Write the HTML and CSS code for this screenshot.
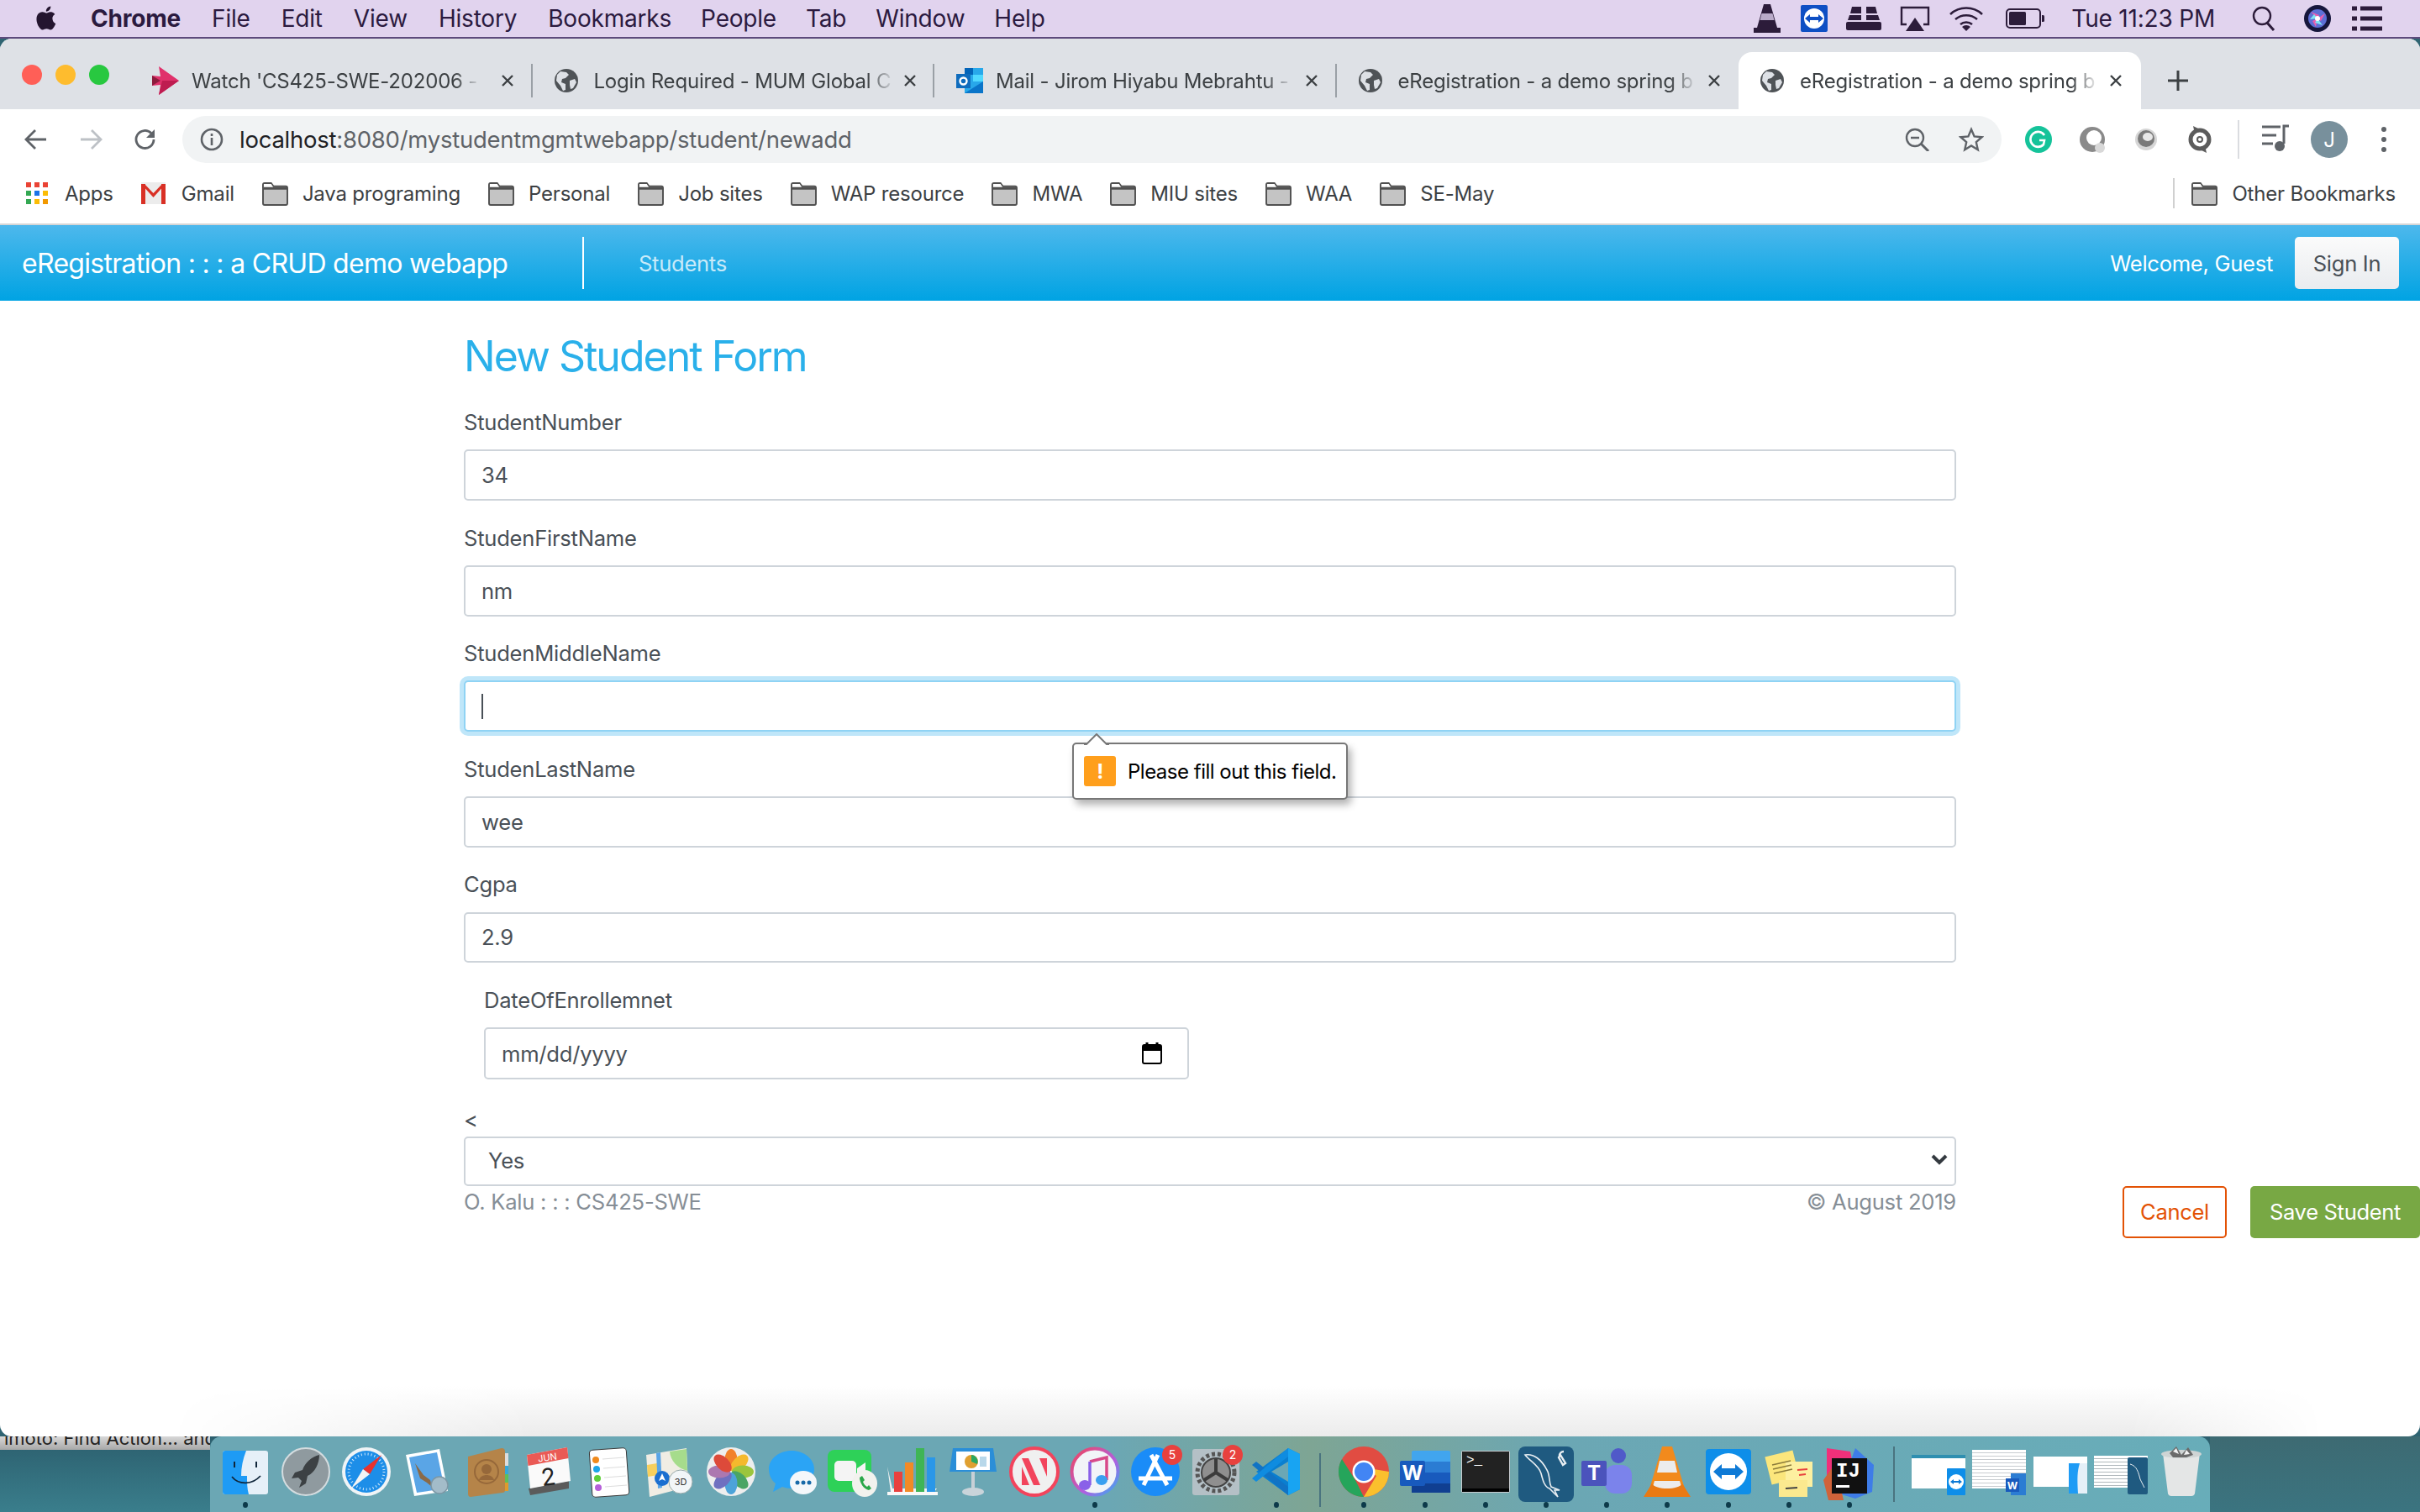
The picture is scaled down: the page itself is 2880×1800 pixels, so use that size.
FILE: index.html
```html
<!DOCTYPE html>
<html lang="en">
<head>
    <meta charset="UTF-8">
    <title>eRegistration - a demo spring boot webapp</title>
    <link rel="stylesheet" href="styles.css">
</head>
<body>
    <svg class="defs" width="0" height="0">
        <symbol id="globe" viewBox="0 0 28 28">
            <circle cx="14" cy="14" r="14" fill="#4f5357"/>
            <path d="M7 3l7 1 3 3-4 4-4 1-1 4 5 2v7l-3 1-3-6-5-6 1-7z" fill="#dee1e6"/>
            <path d="M18 14l6-2 2 4-4 7-3 1-1-5z" fill="#dee1e6"/>
        </symbol>
        <symbol id="folder" viewBox="0 0 32 30">
            <path d="M1 4a2 2 0 012-2h8l3 4h15a2 2 0 012 2v19a2 2 0 01-2 2H3a2 2 0 01-2-2z" fill="#c4c4c4" stroke="#505050" stroke-width="2"/>
            <path d="M1 9h30" stroke="#505050" stroke-width="2"/>
            <path d="M2 3h9l3 5H2z" fill="#fff"/>
            <path d="M2 8h28" stroke="#505050" stroke-width="2"/>
        </symbol>
        <symbol id="close" viewBox="0 0 16 16">
            <path d="M2 2l12 12M14 2L2 14" stroke="#3c4043" stroke-width="2.4"/>
        </symbol>
    </svg>

    <div class="menubar">
        <svg class="apple" viewBox="3 2 18 21"><path fill="#24152f" d="M16.4 12.6c0-2.4 2-3.5 2.1-3.6-1.1-1.7-2.9-1.9-3.5-1.9-1.5-.2-2.9.9-3.7.9-.8 0-1.9-.9-3.2-.8-1.6 0-3.2 1-4 2.4-1.7 3-.4 7.4 1.2 9.8.8 1.2 1.8 2.5 3.1 2.4 1.2 0 1.7-.8 3.2-.8s1.9.8 3.2.8c1.3 0 2.2-1.2 3-2.4.9-1.4 1.3-2.7 1.3-2.8-.1 0-2.6-1-2.6-4zM14 5.4c.7-.8 1.1-1.9 1-3-1 0-2.1.6-2.8 1.4-.6.7-1.2 1.9-1 2.9 1.1.1 2.2-.5 2.8-1.3z"/></svg>
        <span class="menu-app">Chrome</span>
        <span class="menu-item">File</span>
        <span class="menu-item">Edit</span>
        <span class="menu-item">View</span>
        <span class="menu-item">History</span>
        <span class="menu-item">Bookmarks</span>
        <span class="menu-item tight">People</span>
        <span class="menu-item tight">Tab</span>
        <span class="menu-item tight">Window</span>
        <span class="menu-item tight">Help</span>
        <div class="menu-right">
            <svg class="st-vlc" width="32" height="34" viewBox="0 0 32 34"><path d="M12 0h8l8 28h4v6H0v-6h4z" fill="#2c1c3a"/><path d="M9.5 11h13l2 8h-17z" fill="#b9aac8"/></svg>
            <svg class="st-tv" width="32" height="32" viewBox="0 0 32 32"><rect width="32" height="32" rx="2" fill="#0e4fc4"/><circle cx="16" cy="16" r="12" fill="#fff"/><path d="M5 16l6-5v3h10v-3l6 5-6 5v-3H11v3z" fill="#0e4fc4"/></svg>
            <svg class="st-grid" width="42" height="28" viewBox="0 0 42 28"><path d="M7 0h11v8H5zM24 0h11l2 8H24zM4 10h14v6H2zM24 10h14l2 6H24z" fill="#2c1c3a"/><rect y="18" width="42" height="10" rx="2" fill="#2c1c3a"/></svg>
            <svg class="st-air" width="36" height="30" viewBox="0 0 36 30"><path d="M8 22H2V2h32v20h-6" fill="none" stroke="#2c1c3a" stroke-width="2.4"/><path d="M18 14l11 16H7z" fill="#2c1c3a"/></svg>
            <svg class="st-wifi" width="42" height="30" viewBox="0 0 42 30"><path d="M2 10a28 28 0 0138 0M8 16a20 20 0 0126 0M14 22a11 11 0 0114 0" fill="none" stroke="#2c1c3a" stroke-width="2.6"/><path d="M21 30l-5-5a7 7 0 0110 0z" fill="#2c1c3a"/></svg>
            <svg class="st-batt" width="46" height="24" viewBox="0 0 46 24"><rect x="1" y="1" width="40" height="22" rx="4" fill="none" stroke="#2c1c3a" stroke-width="2"/><rect x="4" y="4" width="20" height="16" rx="1.5" fill="#2c1c3a"/><path d="M43 8h1.5a1.5 1.5 0 011.5 1.5v5a1.5 1.5 0 01-1.5 1.5H43z" fill="#2c1c3a"/></svg>
            <span class="menu-clock">Tue 11:23 PM</span>
            <svg class="st-search" width="28" height="30" viewBox="0 0 28 30"><circle cx="12" cy="12" r="10" fill="none" stroke="#2c1c3a" stroke-width="2.4"/><path d="M18 20l8 9" stroke="#2c1c3a" stroke-width="3"/></svg>
            <svg class="st-siri" width="32" height="32" viewBox="0 0 32 32"><circle cx="16" cy="16" r="16" fill="#16163c"/><circle cx="16" cy="16" r="11" fill="#5d6fd6"/><path d="M16 16L8 8l10 4zM16 16l9-6-5 9zM16 16l-2 10-4-7z" fill="#e85fb0"/><path d="M16 16l6 8-9-3zM16 16l-9 1 5-6z" fill="#7fe3f2"/><circle cx="16" cy="16" r="3" fill="#fff"/></svg>
            <svg class="st-list" width="36" height="30" viewBox="0 0 36 30"><path d="M0 3h6M10 3h26M0 15h6M10 15h26M0 27h6M10 27h26" stroke="#2c1c3a" stroke-width="5"/></svg>
        </div>
    </div>

    <div class="window">
        <div class="tabstrip">
            <div class="lights"><i class="light red"></i><i class="light yellow"></i><i class="light green"></i></div>
            <div class="tab sep">
                <svg class="favicon" width="32" height="34" viewBox="0 0 32 34"><path d="M8 0l24 17L8 34l2-12-10 1V11l10 1z" fill="#e0316b"/><path d="M0 11l10 6-10 6z" fill="#8c1c3c"/><path d="M8 34l24-17H12z" fill="#be1c50"/></svg>
                <span class="tab-title">Watch 'CS425-SWE-202006 -</span>
                <svg class="tab-close" width="16" height="16"><use href="#close"/></svg>
            </div>
            <div class="tab sep">
                <svg class="favicon" width="28" height="28"><use href="#globe"/></svg>
                <span class="tab-title">Login Required - MUM Global C</span>
                <svg class="tab-close" width="16" height="16"><use href="#close"/></svg>
            </div>
            <div class="tab sep">
                <svg class="favicon" width="32" height="30" viewBox="0 0 32 30"><rect x="10" y="0" width="22" height="30" fill="#28a8ea"/><rect x="10" y="0" width="10" height="8" fill="#0364b8"/><rect x="20" y="8" width="12" height="8" fill="#50d9ff"/><path d="M10 30l22-14v14z" fill="#0a75c9"/><rect x="0" y="7" width="17" height="17" fill="#0f6cbd"/><circle cx="8.500" cy="15.500" r="4" fill="none" stroke="#fff" stroke-width="2.400"/></svg>
                <span class="tab-title">Mail - Jirom Hiyabu Mebrahtu -</span>
                <svg class="tab-close" width="16" height="16"><use href="#close"/></svg>
            </div>
            <div class="tab">
                <svg class="favicon" width="28" height="28"><use href="#globe"/></svg>
                <span class="tab-title">eRegistration - a demo spring b</span>
                <svg class="tab-close" width="16" height="16"><use href="#close"/></svg>
            </div>
            <div class="tab active">
                <svg class="favicon" width="28" height="28"><use href="#globe"/></svg>
                <span class="tab-title">eRegistration - a demo spring b</span>
                <svg class="tab-close" width="16" height="16"><use href="#close"/></svg>
            </div>
            <svg class="newtab" width="26" height="26" viewBox="0 0 26 26"><path d="M13 1v24M1 13h24" stroke="#3c4043" stroke-width="3"/></svg>
        </div>

        <div class="toolbar">
            <div class="nav-btn"><svg width="28" height="26" viewBox="0 0 28 26"><path d="M26 13H3M13 2L2 13l11 11" fill="none" stroke="#5f6368" stroke-width="2.800"/></svg></div>
            <div class="nav-btn"><svg width="28" height="26" viewBox="0 0 28 26"><path d="M2 13h23M15 2l11 11-11 11" fill="none" stroke="#bdc1c6" stroke-width="2.800"/></svg></div>
            <div class="nav-btn"><svg width="28" height="28" viewBox="0 0 28 28"><path d="M24 14a10.500 10.500 0 11-3-7.400" fill="none" stroke="#5f6368" stroke-width="2.800"/><path d="M25 2v10H15z" fill="#5f6368"/></svg></div>
            <div class="omnibox">
                <svg width="28" height="28" viewBox="0 0 28 28"><circle cx="14" cy="14" r="12" fill="none" stroke="#5f6368" stroke-width="2.600"/><path d="M14 12v9M14 7v3" stroke="#5f6368" stroke-width="2.600"/></svg>
                <span class="url"><b>localhost</b>:8080/mystudentmgmtwebapp/student/newadd</span>
                <svg class="omni-zoom" width="30" height="28" viewBox="0 0 30 28"><circle cx="12" cy="12" r="10" fill="none" stroke="#5f6368" stroke-width="2.400"/><path d="M7 12h10" stroke="#5f6368" stroke-width="2.400"/><path d="M19 19l9 9" stroke="#5f6368" stroke-width="3"/></svg>
                <svg class="omni-star" width="30" height="30" viewBox="0 0 30 30"><path d="M15 3l3.600 8.400 9 .8-6.800 6 2 9L15 22.500 7.200 27.200l2-9-6.800-6 9-.8z" fill="none" stroke="#5f6368" stroke-width="2.400"/></svg>
            </div>
            <div class="ext"><svg width="32" height="32" viewBox="0 0 32 32"><circle cx="16" cy="16" r="16" fill="#15c39a"/><path d="M23 11a9 9 0 10-1 11l1-5h-6" fill="none" stroke="#fff" stroke-width="2.600"/></svg></div>
            <div class="ext"><svg width="32" height="32" viewBox="0 0 32 32"><circle cx="16" cy="16" r="15" fill="#8a8a8a"/><circle cx="18" cy="14" r="9" fill="#fff"/><circle cx="25" cy="26" r="6" fill="#d8d8d8"/></svg></div>
            <div class="ext"><svg width="32" height="32" viewBox="0 0 32 32"><circle cx="16" cy="16" r="13" fill="#d6d6d6"/><circle cx="16" cy="15" r="10" fill="#7a7a7a"/><ellipse cx="18" cy="13" rx="6" ry="5" fill="#e8e8e8"/></svg></div>
            <div class="ext"><svg width="32" height="32" viewBox="0 0 32 32"><circle cx="16" cy="16" r="11" fill="none" stroke="#5c5c5c" stroke-width="5"/><circle cx="16" cy="16" r="3" fill="none" stroke="#5c5c5c" stroke-width="2"/><path d="M8 0l8 4-6 5zM24 32l-8-4 6-5z" fill="#5c5c5c"/></svg></div>
            <i class="tool-divider"></i>
            <div class="media-btn"><svg width="34" height="34" viewBox="0 0 34 34"><path d="M1 4h22M1 14h17M1 24h13" stroke="#5f6368" stroke-width="3"/><path d="M27 24V3h6" fill="none" stroke="#5f6368" stroke-width="3"/><circle cx="22" cy="27" r="6" fill="#5f6368"/></svg></div>
            <div class="avatar">J</div>
            <div class="dots"><i></i><i></i><i></i></div>
        </div>

        <div class="bookmarks">
            <span class="bm bm-apps">
                <svg width="26" height="26" viewBox="0 0 26 26"><rect width="6" height="6" fill="#ea4335"/><rect x="10" width="6" height="6" fill="#ea4335"/><rect x="20" width="6" height="6" fill="#ea4335"/><rect y="10" width="6" height="6" fill="#34a853"/><rect x="10" y="10" width="6" height="6" fill="#1a73e8"/><rect x="20" y="10" width="6" height="6" fill="#fbbc04"/><rect y="20" width="6" height="6" fill="#34a853"/><rect x="10" y="20" width="6" height="6" fill="#fbbc04"/><rect x="20" y="20" width="6" height="6" fill="#f29900"/></svg>
                Apps
            </span>
            <span class="bm bm-gmail">
                <svg width="29" height="26" viewBox="0 0 29 26"><rect width="29" height="26" fill="#ececec"/><path d="M0 26V2h5v24zM24 26V2h5v24z" fill="#d93025"/><path d="M0 2h4l10.500 11L25 2h4L14.500 18z" fill="#d93025"/></svg>
                Gmail
            </span>
            <span class="bm"><svg class="folder" width="31" height="29"><use href="#folder"/></svg>Java programing</span>
            <span class="bm"><svg class="folder" width="31" height="29"><use href="#folder"/></svg>Personal</span>
            <span class="bm"><svg class="folder" width="31" height="29"><use href="#folder"/></svg>Job sites</span>
            <span class="bm"><svg class="folder" width="31" height="29"><use href="#folder"/></svg>WAP resource</span>
            <span class="bm"><svg class="folder" width="31" height="29"><use href="#folder"/></svg>MWA</span>
            <span class="bm"><svg class="folder" width="31" height="29"><use href="#folder"/></svg>MIU sites</span>
            <span class="bm"><svg class="folder" width="31" height="29"><use href="#folder"/></svg>WAA</span>
            <span class="bm"><svg class="folder" width="31" height="29"><use href="#folder"/></svg>SE-May</span>
            <span class="bm bm-other"><svg class="folder" width="31" height="29"><use href="#folder"/></svg>Other Bookmarks</span>
        </div>

        <div class="viewport">
            <nav class="navbar">
                <a class="brand">eRegistration : : : a CRUD demo webapp</a>
                <a class="nav-link">Students</a>
                <span class="welcome">Welcome, Guest</span>
                <a class="signin">Sign In</a>
            </nav>

            <div class="page">
                <form class="student-form">
                    <h2 class="form-title">New Student Form</h2>
                    <div class="form-group">
                        <label>StudentNumber</label>
                        <input class="form-control" type="text" value="34">
                    </div>
                    <div class="form-group">
                        <label>StudenFirstName</label>
                        <input class="form-control" type="text" value="nm">
                    </div>
                    <div class="form-group">
                        <label>StudenMiddleName</label>
                        <div class="form-control focused"><i class="caret"></i></div>
                        <div class="bubble">
                            <svg class="bubble-arrow" width="30" height="14" viewBox="0 0 30 14"><path d="M0 14h2L15 1l13 13h2" fill="#fff" stroke="#777" stroke-width="2"/></svg>
                            <span class="bubble-icon">!</span>
                            Please fill out this field.
                        </div>
                    </div>
                    <div class="form-group">
                        <label>StudenLastName</label>
                        <input class="form-control" type="text" value="wee">
                    </div>
                    <div class="form-group">
                        <label>Cgpa</label>
                        <input class="form-control" type="text" value="2.9">
                    </div>
                    <div class="form-group date-group">
                        <label>DateOfEnrollemnet</label>
                        <div class="form-control date-control">
                            mm/dd/yyyy
                            <svg width="24" height="26" viewBox="0 0 24 26"><path d="M6 0v4M18 0v4" stroke="#000" stroke-width="3"/><rect x="1" y="3" width="22" height="22" rx="2" fill="#fff" stroke="#000" stroke-width="2"/><rect x="1" y="3" width="22" height="7" fill="#000"/></svg>
                        </div>
                    </div>
                    <div class="select-group">
                        <label>&lt;</label>
                        <div class="form-control select-control">
                            Yes
                            <svg width="20" height="14" viewBox="0 0 20 14"><path d="M2 2l8 8 8-8" fill="none" stroke="#343a40" stroke-width="4"/></svg>
                        </div>
                    </div>
                    <div class="form-footer">
                        <span>O. Kalu : : : CS425-SWE</span>
                        <span>© August 2019</span>
                    </div>
                </form>
                <div class="actions">
                    <a class="btn btn-cancel">Cancel</a>
                    <a class="btn btn-save">Save Student</a>
                </div>
            </div>
            <div class="page-fade"></div>
        </div>
    </div>

    <div class="desktop">
        <div class="behind"><span>lmoto: Find Action... and</span></div>
        <div class="dock">
            <!-- finder -->
            <div class="dock-item run"><svg viewBox="0 0 60 60" width="60" height="60"><rect x="3" y="5" width="54" height="52" rx="3" fill="#e6f0f8"/><path d="M6 5h25c-4 10-6 20-6 30h7c0 8 0 15 2 22H6a3 3 0 01-3-3V8a3 3 0 013-3z" fill="#1e9bf5"/><path d="M14 36c8 10 24 10 34-1" fill="none" stroke="#10263a" stroke-width="1.800"/><path d="M17 18v7M43 18v7" stroke="#10263a" stroke-width="2"/></svg></div>
            <!-- launchpad -->
            <div class="dock-item"><svg viewBox="0 0 60 60" width="60" height="60"><circle cx="30" cy="30" r="28" fill="#8f9a9f"/><circle cx="30" cy="30" r="28" fill="none" stroke="#d4dcdf" stroke-width="2"/><path d="M46 10c-9 2-17 9-20 18l-9 3-4 7 8-1 4 4-3 8 8-5 2-9c9-4 14-15 14-25z" fill="#3c4144"/></svg></div>
            <!-- safari -->
            <div class="dock-item"><svg viewBox="0 0 60 60" width="60" height="60"><circle cx="30" cy="30" r="29" fill="#f0f4f6"/><circle cx="30" cy="30" r="25" fill="#1d8ee8"/><circle cx="30" cy="30" r="21" fill="none" stroke="#cfe8fb" stroke-width="3" stroke-dasharray="1 3"/><path d="M48 10L26 27l8 6z" fill="#e9322e"/><path d="M12 50l22-17-8-6z" fill="#f4f4f4"/></svg></div>
            <!-- mail -->
            <div class="dock-item"><svg viewBox="0 0 60 60" width="60" height="60"><path d="M4 10l40-7 10 50-40 6z" fill="#fff"/><path d="M8 13l33-6 9 43-33 5z" fill="#5aa5e6"/><path d="M15 20l10 14 8 6 2 8-6-5-8-5-3-9z" fill="#8a6a48"/><circle cx="44" cy="46" r="10" fill="#a3bcc9" stroke="#7c97a5" stroke-width="1.500"/></svg></div>
            <!-- contacts -->
            <div class="dock-item"><svg viewBox="0 0 60 60" width="60" height="60"><path d="M50 8h4v15h-4z" fill="#ddd"/><path d="M50 23h4v10h-4z" fill="#36a8d8"/><path d="M50 33h4v10h-4z" fill="#5fbf5a"/><path d="M50 43h4v10h-4z" fill="#e09a2c"/><path d="M6 12L46 2q4 0 4 4v46q0 3-3 3L9 60q-3 0-3-4z" fill="#b58449"/><circle cx="28" cy="30" r="14" fill="none" stroke="#96683a" stroke-width="2"/><circle cx="28" cy="27" r="6" fill="#96683a"/><path d="M19 40c2-8 16-8 18 0z" fill="#96683a"/></svg></div>
            <!-- calendar -->
            <div class="dock-item"><svg viewBox="0 0 60 60" width="60" height="60"><path d="M6 50l48-9v9L8 58z" fill="#5b5b5b"/><path d="M4 10l48-9 4 40-48 9z" fill="#fafafa"/><path d="M4 10l48-9 1.500 13-48 9z" fill="#ea5a55"/><text class="cal-month" x="29" y="17" transform="rotate(-8 29 17)">JUN</text><text class="cal-day" x="31" y="46" transform="rotate(-8 31 46)">2</text></svg></div>
            <!-- reminders -->
            <div class="dock-item"><svg viewBox="0 0 60 60" width="60" height="60"><rect x="8" y="3" width="44" height="56" rx="4" transform="rotate(-4 30 30)" fill="#fff" stroke="#3a3a3a" stroke-width="1"/><circle cx="14" cy="16" r="4" fill="#f08a1c"/><circle cx="15" cy="27" r="4" fill="#1ba5e8"/><circle cx="16" cy="38" r="4" fill="#5fcf3a"/><circle cx="17" cy="49" r="4" fill="#b65fd9"/><path d="M22 15l26-2M23 26l26-2M24 37l26-2M25 48l26-2" stroke="#ddd" stroke-width="1"/></svg></div>
            <!-- maps -->
            <div class="dock-item"><svg viewBox="0 0 60 60" width="60" height="60"><path d="M2 10L50 2l2 46-46 12z" fill="#f0ede4"/><path d="M30 6l20-3 1 26c-12-3-20-12-21-23z" fill="#a6dc8c"/><path d="M3 22l12-2 1 14-12 2z" fill="#f7cf5c"/><path d="M14 8l5-1 2 42-5 1z" fill="#5aa5e6"/><circle cx="21" cy="38" r="9" fill="#1a6fd0"/><path d="M21 32l4 9-4-2-4 2z" fill="#fff"/><circle cx="43" cy="42" r="14" fill="#f2f6f8" stroke="#9aa" stroke-width="1"/><text class="maps-3d" x="43" y="46">3D</text></svg></div>
            <!-- photos -->
            <div class="dock-item"><svg viewBox="0 0 60 60" width="60" height="60"><circle cx="30" cy="30" r="29" fill="#eee"/><ellipse cx="30" cy="16" rx="7.500" ry="13" fill="#f2812a"/><ellipse cx="30" cy="16" rx="7.500" ry="13" fill="#f5b92d" transform="rotate(45 30 30)"/><ellipse cx="30" cy="16" rx="7.500" ry="13" fill="#9bc53d" transform="rotate(90 30 30)"/><ellipse cx="30" cy="16" rx="7.500" ry="13" fill="#4aa564" transform="rotate(135 30 30)"/><ellipse cx="30" cy="16" rx="7.500" ry="13" fill="#4da3d9" transform="rotate(180 30 30)"/><ellipse cx="30" cy="16" rx="7.500" ry="13" fill="#6f70c0" transform="rotate(225 30 30)"/><ellipse cx="30" cy="16" rx="7.500" ry="13" fill="#ac78b0" transform="rotate(270 30 30)"/><ellipse cx="30" cy="16" rx="7.500" ry="13" fill="#dd4a3a" transform="rotate(315 30 30)"/></svg></div>
            <!-- messages -->
            <div class="dock-item"><svg viewBox="0 0 60 60" width="60" height="60"><path d="M30 5c15 0 27 10 27 22S45 50 30 50c-4 0-8-1-11-2l-11 6 3-10C6 40 3 34 3 27 3 15 15 5 30 5z" fill="#2ba4f5"/><ellipse cx="44" cy="43" rx="16" ry="14" fill="#f4f7fa"/><circle cx="37" cy="43" r="2.500" fill="#1869a8"/><circle cx="44" cy="43" r="2.500" fill="#1869a8"/><circle cx="51" cy="43" r="2.500" fill="#1869a8"/></svg></div>
            <!-- facetime -->
            <div class="dock-item"><svg viewBox="0 0 60 60" width="60" height="60"><rect x="1" y="4" width="52" height="50" rx="8" fill="#2ed158"/><rect x="9" y="17" width="26" height="24" rx="5" fill="#f4f4f4"/><path d="M36 26l10-7v20l-10-7z" fill="#f4f4f4"/><ellipse cx="45" cy="44" rx="15" ry="16" fill="#f2f2ee"/><path d="M39 37l3-2 3 5-2 2c1 3 3 5 5 6l2-2 3 4-3 2c-6-1-11-9-11-15z" fill="#2aa84a"/></svg></div>
            <!-- numbers -->
            <div class="dock-item"><svg viewBox="0 0 60 60" width="60" height="60"><path d="M0 24l4 30h52l3-4H6z" fill="#f3f3f3"/><rect x="8" y="30" width="10" height="25" fill="#e8413e"/><rect x="21" y="19" width="10" height="36" fill="#f28a26"/><rect x="34" y="2" width="10" height="53" fill="#3fb555"/><rect x="47" y="13" width="10" height="42" fill="#2a97e8"/><rect y="54" width="60" height="4" fill="#f8f8f8"/></svg></div>
            <!-- keynote -->
            <div class="dock-item"><svg viewBox="0 0 60 60" width="60" height="60"><path d="M6 2h48l4 28H2z" fill="#2a8ed8"/><rect x="10" y="6" width="40" height="22" fill="#fff"/><circle cx="28" cy="18" r="8" fill="#e0a030"/><path d="M28 18V10a8 8 0 017 11z" fill="#2aa860"/><rect x="38" y="12" width="8" height="12" fill="#b8d8ea"/><rect x="28" y="30" width="4" height="22" fill="#c8d0d6"/><ellipse cx="30" cy="54" rx="13" ry="5" fill="#c9d4da"/></svg></div>
            <!-- news -->
            <div class="dock-item"><svg viewBox="0 0 60 60" width="60" height="60"><circle cx="30" cy="30" r="28" fill="#f0f0f0" stroke="#f2445c" stroke-width="4"/><path d="M15 14h8l14 32h-8z" fill="#f2445c"/><path d="M15 24l9 22h-9zM45 36l-9-22h9z" fill="#f2445c"/></svg></div>
            <!-- itunes -->
            <div class="dock-item run"><svg viewBox="0 0 60 60" width="60" height="60"><defs><linearGradient id="ringi" x1="0" y1="0" x2="1" y2="1"><stop offset="0" stop-color="#f2445c"/><stop offset=".6" stop-color="#b060e0"/><stop offset="1" stop-color="#30b0f0"/></linearGradient></defs><circle cx="30" cy="30" r="27.500" fill="#f2f4f8" stroke="url(#ringi)" stroke-width="4"/><path d="M24 18l20-5v27" fill="none" stroke="#d84a8a" stroke-width="3.500"/><path d="M24 18v28" stroke="#8a60e8" stroke-width="3.500"/><ellipse cx="18" cy="46" rx="7" ry="6" fill="#8a60e8"/><ellipse cx="38" cy="40" rx="7" ry="6" fill="#3aa0f0"/></svg></div>
            <!-- app store -->
            <div class="dock-item"><svg viewBox="0 0 60 60" width="60" height="60"><circle cx="30" cy="30" r="29" fill="#1a8cf8"/><path d="M33 10L16 46M25 10l19 36M10 38h40" stroke="#fff" stroke-width="5" fill="none"/><circle cx="50" cy="10" r="12" fill="#e8413e"/><text class="badge-num" x="50" y="15">5</text></svg></div>
            <!-- system prefs -->
            <div class="dock-item"><svg viewBox="0 0 60 60" width="60" height="60"><rect x="2" y="3" width="56" height="55" rx="3" fill="#b4c0c6"/><circle cx="30" cy="31" r="22" fill="none" stroke="#555" stroke-width="5" stroke-dasharray="4 3"/><circle cx="30" cy="31" r="17" fill="#8f8f8f" stroke="#444" stroke-width="2"/><path d="M30 31V15M30 31l14 9M30 31l-14 9" stroke="#3c3c3c" stroke-width="4"/><circle cx="50" cy="10" r="12" fill="#e8413e"/><text class="badge-num" x="50" y="15">2</text></svg></div>
            <!-- vscode -->
            <div class="dock-item run"><svg viewBox="0 0 60 60" width="60" height="60"><path d="M44 2l14 7v42l-14 7L6 30z" fill="#0a7fd0"/><path d="M44 2l14 7v42l-14 7z" fill="#18a4f2"/><path d="M1 22l5-4 38 30v10z" fill="#1173c4"/><path d="M1 38l5 4 38-30V2z" fill="#0f8ce0"/><path d="M44 18L24 30l20 12z" fill="#6ba7b4"/></svg></div>
            <i class="dock-divider"></i>
            <!-- chrome -->
            <div class="dock-item run"><svg viewBox="0 0 60 60" width="60" height="60"><circle cx="30" cy="30" r="30" fill="#e14c42"/><path d="M30 60a30 30 0 01-26-45l16 25z" fill="#25a55b"/><path d="M30 60l15-25-15-10 30 5a30 30 0 01-30 30z" fill="#fbc02d"/><circle cx="30" cy="30" r="13.500" fill="#fff"/><circle cx="30" cy="30" r="11" fill="#4285f4"/></svg></div>
            <!-- word -->
            <div class="dock-item run"><svg viewBox="0 0 60 60" width="60" height="60"><rect x="14" y="5" width="46" height="50" rx="2" fill="#41a5ee"/><rect x="14" y="18" width="46" height="13" fill="#2b7cd3"/><rect x="14" y="31" width="46" height="13" fill="#185abd"/><rect x="14" y="44" width="46" height="11" fill="#103f91"/><rect x="0" y="17" width="30" height="30" rx="2" fill="#185abd"/><text class="word-w" x="15" y="40">W</text></svg></div>
            <!-- terminal -->
            <div class="dock-item run"><svg viewBox="0 0 60 60" width="60" height="60"><rect x="1" y="5" width="58" height="50" rx="2" fill="#c8ccd0"/><rect x="2" y="6" width="56" height="48" fill="#222"/><rect x="2" y="50" width="56" height="4" fill="#000"/><text class="term-text" x="7" y="21">&gt;_</text></svg></div>
            <!-- mysql -->
            <div class="dock-item run"><svg viewBox="0 0 66 66" width="66" height="66"><rect width="66" height="66" rx="8" fill="#1f5a80"/><path d="M8 10c10-2 20 6 26 18 4 7 2 14 5 20l10 4-6 0 4 8-10-10c-6-2-8-10-10-18C24 22 14 18 8 10z" fill="none" stroke="#e8eef2" stroke-width="1.600"/><path d="M50 10l6 10-3 2-5-9zM54 6a5 5 0 00-5 5" fill="none" stroke="#e8eef2" stroke-width="2.400"/></svg></div>
            <!-- teams -->
            <div class="dock-item run"><svg viewBox="0 0 60 60" width="60" height="60"><circle cx="44" cy="11" r="9" fill="#5059c9"/><rect x="28" y="22" width="32" height="34" rx="12" fill="#7b83eb"/><rect x="0" y="17" width="30" height="30" rx="2" fill="#4b53bc"/><text class="word-w" x="15" y="40">T</text></svg></div>
            <!-- vlc -->
            <div class="dock-item run"><svg viewBox="0 0 60 60" width="60" height="60"><path d="M24 0h12l16 54H8z" fill="#f28a1c"/><path d="M21 17h18l3 14H18z" fill="#ececec"/><path d="M15 41h30l3 10H12z" fill="#ececec"/><path d="M12 44L2 60h56L48 44c-4 8-32 8-36 0z" fill="#e97a14"/></svg></div>
            <!-- teamviewer -->
            <div class="dock-item run"><svg viewBox="0 0 60 60" width="60" height="60"><rect x="3" y="3" width="54" height="54" rx="4" fill="#0e8ee9"/><circle cx="30" cy="30" r="22" fill="#fff"/><path d="M12 30l10-9v5h16v-5l10 9-10 9v-5H22v5z" fill="#0e7ad6"/></svg></div>
            <!-- stickies -->
            <div class="dock-item run"><svg viewBox="0 0 60 60" width="60" height="60"><rect x="5" y="8" width="34" height="34" fill="#fbe67c" transform="rotate(-14 22 25)"/><rect x="26" y="18" width="32" height="30" fill="#fdf0a0"/><rect x="18" y="40" width="34" height="20" fill="#fbe98f"/><path d="M10 22l22-5M11 27l22-5M12 32l22-5" stroke="#8a7a3a" stroke-width="1.400"/><path d="M40 28l12-1M42 34l8-1" stroke="#e8413e" stroke-width="2"/><path d="M26 50l14-1" stroke="#444" stroke-width="2"/></svg></div>
            <!-- intellij -->
            <div class="dock-item run"><svg viewBox="0 0 66 66" width="66" height="66"><path d="M6 2l28 4 8 40-36-8z" fill="#f0307a"/><path d="M40 2l22 20-2 32-20 8-20-6z" fill="#3e7ce8"/><path d="M2 40l14-20 10 44-18 0z" fill="#d0633a"/><rect x="12" y="14" width="42" height="42" fill="#111"/><text class="ij-text" x="17" y="36">IJ</text><rect x="17" y="46" width="16" height="3" fill="#fff"/></svg></div>
            <i class="dock-divider dock-divider-tall"></i>
            <div class="dock-item"><div class="thumb thumb-a"><svg viewBox="0 0 22 32" width="22" height="32"><rect width="22" height="32" rx="1" fill="#0e8ee9"/><circle cx="11" cy="16" r="9" fill="#fff"/><path d="M4 16l4-3v2h6v-2l4 3-4 3v-2H8v2z" fill="#0e7ad6"/></svg></div></div>
            <div class="dock-item"><div class="thumb thumb-b"><svg viewBox="0 0 24 26" width="24" height="26"><rect x="6" width="18" height="26" fill="#2b7cd3"/><rect width="16" height="16" y="6" fill="#185abd"/><text class="thumb-w" x="8" y="19">W</text></svg></div></div>
            <div class="dock-item"><div class="thumb thumb-c"><svg viewBox="0 0 22 36" width="22" height="36"><rect width="22" height="36" fill="#e6f0f8"/><path d="M0 0h13c-3 10-3 18-2 36H0z" fill="#1e9bf5"/></svg></div></div>
            <div class="dock-item"><div class="thumb thumb-d"><svg viewBox="0 0 24 44" width="24" height="44"><rect width="24" height="44" rx="2" fill="#1f5a80"/><path d="M3 8c8 2 10 10 12 18l5 10" fill="none" stroke="#e8eef2" stroke-width="1"/></svg></div></div>
            <div class="dock-item"><svg viewBox="0 0 60 60" width="60" height="60"><path d="M8 8l6 48q1 3 4 3h24q3 0 4-3l6-48z" fill="#e4e6e6"/><ellipse cx="30" cy="9" rx="24" ry="5" fill="#cfd4d4"/><path d="M16 8l8-8 6 10 8-9 6 9-8 3H20z" fill="#6b6b6b"/><path d="M20 6l4-4 3 7zM36 4l4 5-7 1z" fill="#f2f2f2"/></svg></div>
        </div>
        <div class="desktop-right"></div>
    </div>
</body>
</html>
```

FILE: styles.css
```css
* {
    box-sizing: border-box;
}

html, body {
    margin: 0;
    height: 100%;
}

body {
    display: flex;
    flex-direction: column;
    width: 2880px;
    height: 1800px;
    overflow: hidden;
    font-family: Inter, "Liberation Sans", sans-serif;
    background: #2f6472;
}

.defs {
    position: absolute;
}

/* mac menu bar */
.menubar {
    display: flex;
    align-items: center;
    flex: none;
    height: 46px;
    padding-left: 43px;
    font-size: 28px;
    letter-spacing: -0.2px;
    color: #2b1a3f;
    background: #e1d3ee;
    border-bottom: 2px solid #5d4a7c;
}

.apple {
    width: 26px;
    height: 32px;
}

.menu-app {
    margin-left: 39px;
    font-weight: 700;
}

.menu-item {
    margin-left: 37px;
}

.menu-item.tight {
    margin-left: 35px;
}

.menu-right {
    display: flex;
    align-items: center;
    margin-left: auto;
    padding-right: 45px;
}

.st-tv { margin-left: 24px; }
.st-grid { margin-left: 22px; }
.st-air { margin-left: 22px; }
.st-wifi { margin-left: 22px; }
.st-batt { margin-left: 26px; }
.menu-clock { margin-left: 32px; white-space: nowrap; }
.st-search { margin-left: 44px; }
.st-siri { margin-left: 34px; }
.st-list { margin-left: 25px; }

/* browser window */
.window {
    position: relative;
    display: flex;
    flex-direction: column;
    flex: 1;
    min-height: 0;
    overflow: hidden;
    background: #fff;
    border-radius: 14px;
}

.tabstrip {
    display: flex;
    align-items: flex-end;
    flex: none;
    height: 84px;
    background: #dee1e6;
}

.lights {
    display: flex;
    align-self: flex-start;
    gap: 16px;
    width: 155px;
    padding: 31px 0 0 26px;
}

.light {
    width: 24px;
    height: 24px;
    border-radius: 50%;
}

.red { background: #ff5f57; }
.yellow { background: #febc2e; }
.green { background: #28c840; }

.tab {
    position: relative;
    display: flex;
    align-items: center;
    flex: none;
    width: 478.500px;
    height: 68px;
    padding-left: 26px;
    font-size: 24px;
    color: #3c4043;
}

.tab.sep::after {
    content: "";
    position: absolute;
    right: 0;
    top: 14px;
    height: 40px;
    width: 2px;
    background: #9aa0a6;
}

.tab.active {
    background: #fff;
    border-radius: 16px 16px 0 0;
}

.favicon {
    flex: none;
}

.tab-title {
    position: absolute;
    left: 73px;
    white-space: nowrap;
    letter-spacing: -0.2px;
    -webkit-mask-image: linear-gradient(to right, #000 92%, rgba(0, 0, 0, .15));
    mask-image: linear-gradient(to right, #000 92%, rgba(0, 0, 0, .15));
}

.tab-close {
    position: absolute;
    left: 441px;
}

.newtab {
    align-self: center;
    margin: 16px 0 0 31px;
}

.toolbar {
    display: flex;
    align-items: center;
    flex: none;
    height: 72px;
    padding: 0 0 0 10px;
    background: #fff;
}

.nav-btn {
    display: flex;
    justify-content: center;
    width: 65px;
}

.omnibox {
    display: flex;
    align-items: center;
    width: 2165px;
    height: 56px;
    margin: 0 28px 0 12px;
    padding-left: 21px;
    border-radius: 28px;
    background: #f1f3f4;
}

.url {
    margin-left: 19px;
    font-size: 27.500px;
    letter-spacing: -0.25px;
    color: #5f6368;
    white-space: nowrap;
}

.url b {
    font-weight: 400;
    color: #202124;
}

.omni-zoom {
    margin-left: auto;
}

.omni-star {
    margin: 0 21px 0 34px;
}

.ext {
    display: flex;
    justify-content: center;
    width: 32px;
    margin-right: 32px;
}

.tool-divider {
    width: 2px;
    height: 46px;
    margin-left: -3px;
    background: #dadce0;
}

.media-btn {
    width: 34px;
    margin-left: 26px;
}

.avatar {
    display: flex;
    align-items: center;
    justify-content: center;
    width: 44px;
    height: 44px;
    margin-left: 25px;
    border-radius: 50%;
    font-size: 24px;
    color: #fff;
    background: #78909c;
}

.dots {
    display: flex;
    flex-direction: column;
    gap: 6px;
    margin-left: 40px;
}

.dots i {
    width: 6px;
    height: 6px;
    border-radius: 50%;
    background: #5f6368;
}

.bookmarks {
    display: flex;
    align-items: center;
    flex: none;
    gap: 33px;
    height: 66px;
    padding: 0 29px 8px 31px;
    font-size: 24px;
    letter-spacing: -0.2px;
    color: #3c4043;
    border-bottom: 2px solid #d6d6d6;
}

.bm {
    display: flex;
    align-items: center;
    gap: 17px;
    white-space: nowrap;
}

.bm-apps { gap: 20px; }
.bm-gmail { gap: 19px; }

.bm-other {
    position: relative;
    margin-left: auto;
}

.bm-other::before {
    content: "";
    position: absolute;
    left: -22px;
    top: -4px;
    width: 2px;
    height: 36px;
    background: #d0d0d0;
}

.viewport {
    position: relative;
    flex: 1;
    min-height: 0;
}

/* site navbar */
.navbar {
    display: flex;
    align-items: center;
    height: 90px;
    padding: 0 25px 0 26px;
    color: #fff;
    background: linear-gradient(#4db8ec, #00a3e3);
}

.brand {
    display: flex;
    align-items: center;
    width: 669px;
    height: 62px;
    font-size: 32px;
    letter-spacing: -0.7px;
    border-right: 2px solid #fff;
}

.nav-link {
    margin-left: 65px;
    font-size: 25.600px;
    letter-spacing: -0.3px;
    color: rgba(255, 255, 255, .75);
}

.welcome {
    margin-left: auto;
    font-size: 25.600px;
    letter-spacing: -0.3px;
}

.signin {
    display: flex;
    align-items: center;
    justify-content: center;
    width: 124px;
    height: 62px;
    margin-left: 26px;
    font-size: 25.600px;
    letter-spacing: -0.3px;
    color: #495057;
    border-radius: 5px;
    background: linear-gradient(#fbfbfb, #e9ecef);
}

/* form */
.page {
    display: grid;
    grid-template-columns: 552px 1776px 1fr;
}

.student-form {
    grid-column: 2;
    padding: 36px 0 24px;
    font-size: 25.600px;
    letter-spacing: -0.25px;
    color: #495057;
}

.form-title {
    margin: 0 0 28.560px;
    font-size: 50px;
    line-height: 61.440px;
    font-weight: 400;
    letter-spacing: -2px;
    color: #2ab0ea;
}

.form-group {
    position: relative;
    margin-bottom: 25.600px;
}

label {
    display: block;
    margin-bottom: 12.800px;
    line-height: 38.400px;
}

.form-control {
    display: block;
    width: 100%;
    height: 60.800px;
    padding: 0 19px;
    font: inherit;
    letter-spacing: inherit;
    color: #495057;
    background: #fff;
    border: 2px solid #ced4da;
    border-radius: 5px;
}

.focused {
    display: flex;
    align-items: center;
    border-color: #8fd3f4;
    box-shadow: 0 0 0 5px #bfe6f9;
}

.caret {
    width: 2px;
    height: 30px;
    background: #495057;
}

.bubble {
    position: absolute;
    left: 724px;
    top: 125px;
    z-index: 2;
    display: flex;
    align-items: center;
    width: 328px;
    height: 68px;
    padding-left: 12px;
    font-size: 24px;
    letter-spacing: -0.5px;
    color: #000;
    background: #fff;
    border: 2px solid #777;
    border-radius: 5px;
    box-shadow: 4px 6px 10px rgba(0, 0, 0, .3);
}

.bubble-arrow {
    position: absolute;
    left: 12px;
    top: -13px;
}

.bubble-icon {
    display: flex;
    align-items: center;
    justify-content: center;
    width: 38px;
    height: 36px;
    margin-right: 14px;
    font-weight: 700;
    color: #fff;
    background: #ff9f1c;
    border-radius: 3px;
}

.date-group {
    width: 863px;
    margin-bottom: 29px;
    padding-left: 24px;
}

.date-control {
    display: flex;
    align-items: center;
    justify-content: space-between;
    height: 62px;
    padding-right: 30px;
}

.select-group label {
    margin-bottom: 0;
}

.select-control {
    display: flex;
    align-items: center;
    justify-content: space-between;
    height: 59px;
    padding: 0 8px 2px 27px;
}

.form-footer {
    display: flex;
    justify-content: space-between;
    line-height: 38.400px;
    color: #868e96;
}

.actions {
    display: flex;
    grid-column: 3;
    align-self: end;
    justify-content: flex-end;
    gap: 28px;
    font-size: 25.600px;
    letter-spacing: -0.35px;
}

.btn {
    display: flex;
    align-items: center;
    justify-content: center;
    height: 62px;
    border-radius: 5px;
}

.btn-cancel {
    width: 124px;
    color: #e35205;
    border: 2px solid #e35205;
}

.btn-save {
    width: 202px;
    color: #fff;
    background: #78a844;
}

.page-fade {
    position: absolute;
    left: 0;
    right: 0;
    bottom: 0;
    height: 60px;
    background: linear-gradient(#fff, #ebebeb);
    -webkit-mask-image: linear-gradient(to right, transparent 7%, #000 22%, #000 88%, transparent 96%);
    mask-image: linear-gradient(to right, transparent 7%, #000 22%, #000 88%, transparent 96%);
}

/* dock and wallpaper */
.desktop {
    display: flex;
    flex: none;
    height: 90px;
    background: linear-gradient(#2c5f6e, #3a7e8c);
}

.behind {
    flex: none;
    width: 250px;
    height: 16px;
    overflow: hidden;
    font-size: 22px;
    line-height: 24px;
    color: #222;
    background: linear-gradient(#d8d8d8, #a8a8a8);
}

.behind span {
    display: block;
    margin: -10px 0 0 5px;
    white-space: nowrap;
}

.dock {
    display: flex;
    flex: none;
    width: 2380px;
    height: 90px;
    padding: 12px 0 0 6px;
    border-radius: 14px 14px 0 0;
    background: linear-gradient(to right, #6ba7b4 0, #6ba7b4 45%, #7ea594 55%, #6ba7b4 68%, #68adb9 100%);
}

.dock-item {
    position: relative;
    display: flex;
    flex-direction: column;
    align-items: center;
    flex: none;
    width: 72.200px;
    height: 60px;
}

.dock-item svg {
    flex: none;
    overflow: visible;
}

.dock-item.run::after {
    content: "";
    position: absolute;
    left: 50%;
    top: 66px;
    width: 6px;
    height: 7px;
    margin-left: -3px;
    border-radius: 50%;
    background: #0d3a4a;
}

.dock-divider {
    flex: none;
    width: 32px;
    height: 64px;
    margin-top: 8px;
    background: linear-gradient(#4a7480, #4a7480) center / 2px 100% no-repeat;
}

.dock-divider-tall {
    width: 34px;
    height: 66px;
    margin-top: 0;
}

.thumb {
    position: relative;
    width: 64px;
    background: #fff;
}

.thumb svg {
    position: absolute;
    right: 0;
    bottom: -8px;
}

.thumb-a { height: 40px; margin-top: 10px; background: linear-gradient(#2f8fb0 0 4px, #fff 4px); }
.thumb-b { height: 46px; margin-top: 4px; background: repeating-linear-gradient(#fff 0 3px, #c8ccd0 3px 4px); }
.thumb-c { height: 36px; margin-top: 12px; }
.thumb-d { height: 38px; margin-top: 11px; background: repeating-linear-gradient(#fff 0 3px, #b0b8bc 3px 4px); }

.desktop-right {
    flex: 1;
    background: linear-gradient(#3d6a72, #3b7480);
}

/* text inside the dock icons */
.cal-month, .cal-day, .maps-3d, .badge-num {
    text-anchor: middle;
}

.cal-month {
    font-size: 11px;
    fill: #fff;
}

.cal-day {
    font-size: 28px;
    fill: #222;
}

.maps-3d {
    font-size: 11px;
    fill: #333;
}

.badge-num {
    font-size: 14px;
    fill: #fff;
}

.word-w {
    font-size: 24px;
    font-weight: 700;
    text-anchor: middle;
    fill: #fff;
}

.term-text {
    font-family: "Liberation Mono", monospace;
    font-size: 16px;
    fill: #fff;
}

.ij-text {
    font-family: "Liberation Mono", monospace;
    font-size: 24px;
    font-weight: 700;
    fill: #fff;
}

.thumb-w {
    font-size: 12px;
    font-weight: 700;
    text-anchor: middle;
    fill: #fff;
}
```
